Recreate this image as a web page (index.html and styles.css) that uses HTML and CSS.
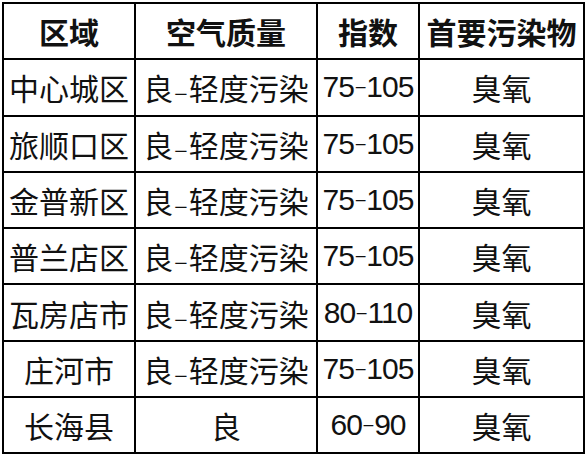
FILE: index.html
```html
<!DOCTYPE html>
<html lang="zh">
<head>
<meta charset="utf-8">
<link rel="stylesheet" href="styles.css">
</head>
<body>
<div class="table">
  <div class="cell head">区域</div>
  <div class="cell head">空气质量</div>
  <div class="cell head">指数</div>
  <div class="cell head">首要污染物</div>

  <div class="cell">中心城区</div>
  <div class="cell">良<span class="dash">-</span>轻度污染</div>
  <div class="cell num">75<span class="dash">-</span>105</div>
  <div class="cell">臭氧</div>

  <div class="cell">旅顺口区</div>
  <div class="cell">良<span class="dash">-</span>轻度污染</div>
  <div class="cell num">75<span class="dash">-</span>105</div>
  <div class="cell">臭氧</div>

  <div class="cell">金普新区</div>
  <div class="cell">良<span class="dash">-</span>轻度污染</div>
  <div class="cell num">75<span class="dash">-</span>105</div>
  <div class="cell">臭氧</div>

  <div class="cell">普兰店区</div>
  <div class="cell">良<span class="dash">-</span>轻度污染</div>
  <div class="cell num">75<span class="dash">-</span>105</div>
  <div class="cell">臭氧</div>

  <div class="cell">瓦房店市</div>
  <div class="cell">良<span class="dash">-</span>轻度污染</div>
  <div class="cell num">80<span class="dash">-</span>110</div>
  <div class="cell">臭氧</div>

  <div class="cell">庄河市</div>
  <div class="cell">良<span class="dash">-</span>轻度污染</div>
  <div class="cell num">75<span class="dash">-</span>105</div>
  <div class="cell">臭氧</div>

  <div class="cell">长海县</div>
  <div class="cell">良</div>
  <div class="cell num">60<span class="dash">-</span>90</div>
  <div class="cell">臭氧</div>
</div>
</body>
</html>
```

FILE: styles.css
```css
html, body {
  margin: 0;
  padding: 0;
  background: #ffffff;
}

body {
  padding: 2px 0 0 2px;
  font-family: "Noto Sans CJK SC", "Noto Sans", sans-serif;
  color: #111111;
}

.table {
  display: grid;
  grid-template-columns: 130px 180px 100px 163px;
  grid-template-rows: repeat(8, 54.3px);
  gap: 2px;
  padding: 2px;
  background: #000000;
  width: max-content;
}

.cell {
  background: #ffffff;
  display: flex;
  align-items: center;
  justify-content: center;
  font-size: 30px;
  line-height: 1;
  white-space: nowrap;
}

.head {
  font-weight: 700;
}

.dash {
  display: inline-block;
  font-size: 44px;
  line-height: 1;
  transform: translateY(4px) scaleY(0.45);
}

.num {
  font-family: "Liberation Sans", "Noto Sans CJK SC", sans-serif;
  font-size: 30px;
  letter-spacing: -1px;
}

.num .dash {
  font-size: 40px;
  transform: translateY(-0.5px) scaleY(0.4);
}
```
